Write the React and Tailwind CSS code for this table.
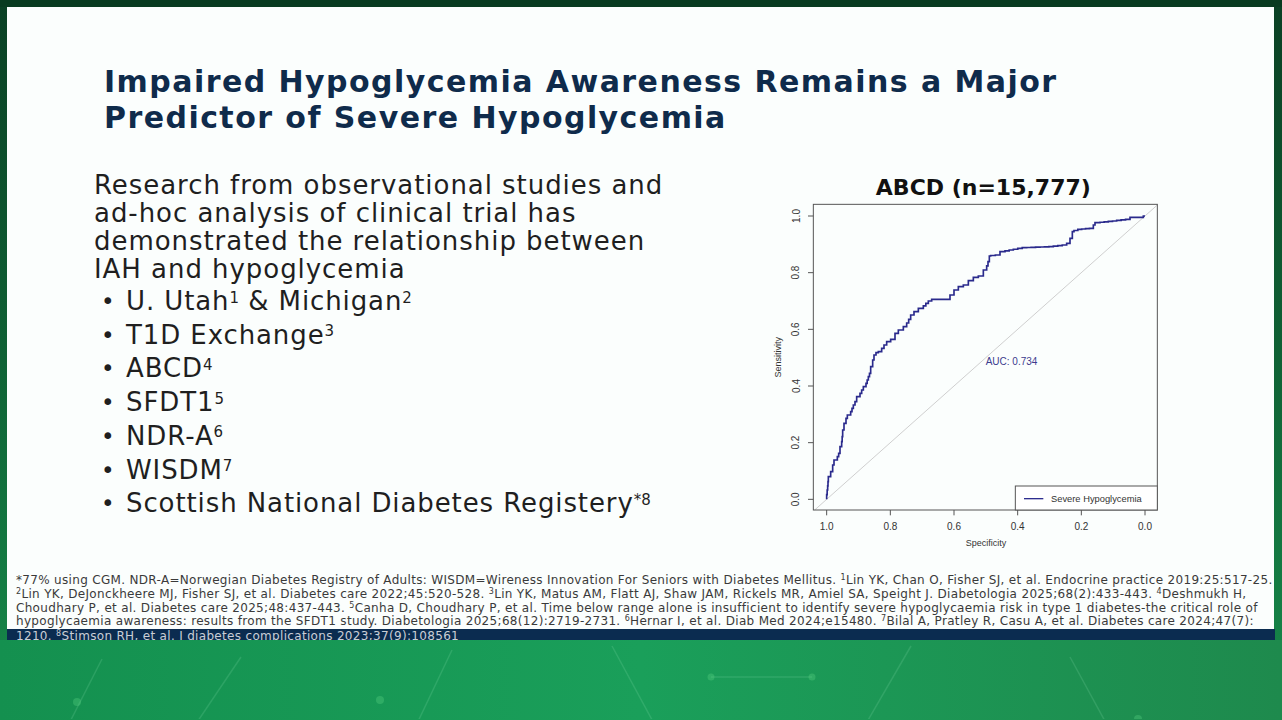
import React from "react";

const curve = [
  [200, 1018], [203, 990], [205, 965], [212, 950], [218, 935], [222, 915], [232, 900], [240, 880],
  [245, 860], [248, 830], [252, 810], [258, 790], [262, 775], [272, 765], [280, 745], [285, 735],
  [290, 725], [300, 710], [310, 690], [318, 680], [325, 660], [332, 640], [338, 620], [342, 600],
  [348, 585], [355, 578], [365, 575], [372, 565], [380, 555], [392, 545], [405, 538], [415, 520],
  [430, 510], [440, 500], [452, 478], [462, 465], [475, 455], [490, 445], [505, 430], [515, 423],
  [530, 418], [570, 418], [582, 405], [595, 390], [610, 380], [625, 375], [640, 362], [655, 352],
  [670, 348], [680, 330], [688, 305], [692, 288], [720, 285], [735, 275], [760, 270], [800, 263],
  [880, 260], [920, 255], [930, 250], [937, 235], [942, 215], [965, 208], [1000, 205], [1005, 195],
  [1020, 188], [1070, 183], [1110, 178], [1112, 172], [1150, 172], [1155, 168],
];

// turn the traced points into the stair steps of an ROC curve
const stairs = (pts) => {
  let d = `M${pts[0][0]},${pts[0][1]}`;
  for (let i = 1; i < pts.length; i++) {
    const [ax, ay] = pts[i - 1];
    const [bx, by] = pts[i];
    const n = Math.max(1, Math.round(Math.hypot(bx - ax, by - ay) / 14));
    for (let k = 1; k <= n; k++) {
      d += ` V${(ay + ((by - ay) * k) / n).toFixed(1)} H${(ax + ((bx - ax) * k) / n).toFixed(1)}`;
    }
  }
  return d;
};

const yTicks = [0, 0.2, 0.4, 0.6, 0.8, 1];
const xTicks = [1, 0.8, 0.6, 0.4, 0.2, 0];

const RocChart = () => (
  <svg width="420" height="400" viewBox="0 0 1260 1200" className="shrink-0" style={{ fontFamily: "'Liberation Sans', Arial, sans-serif" }}>
    <text x="670" y="105" textAnchor="middle" fontSize="66" fontWeight="700" fill="#111" style={{ fontFamily: "'DejaVu Sans', sans-serif" }}>
      ABCD (n=15,777)
    </text>
    <line x1="164" y1="1050" x2="1192" y2="135" stroke="#cfcfcf" strokeWidth="3" />
    <path d={stairs(curve)} fill="none" stroke="#2a2a8c" strokeWidth="5" />
    <rect x="160" y="133" width="1032" height="917" fill="none" stroke="#555" strokeWidth="3" />
    {yTicks.map((t) => {
      const y = 1018 - t * 850;
      return (
        <g key={t}>
          <line x1="144" y1={y} x2="160" y2={y} stroke="#555" strokeWidth="3" />
          <text x="108" y={y} textAnchor="middle" dominantBaseline="central" fontSize="30" fill="#333" transform={`rotate(-90 108 ${y})`}>
            {t.toFixed(1)}
          </text>
        </g>
      );
    })}
    {xTicks.map((s) => {
      const x = 200 + (1 - s) * 955;
      return (
        <g key={s}>
          <line x1={x} y1="1050" x2={x} y2="1066" stroke="#555" strokeWidth="3" />
          <text x={x} y="1100" textAnchor="middle" dominantBaseline="central" fontSize="30" fill="#333">
            {s.toFixed(1)}
          </text>
        </g>
      );
    })}
    <text x="55" y="592" textAnchor="middle" dominantBaseline="central" fontSize="27" fill="#333" transform="rotate(-90 55 592)">
      Sensitivity
    </text>
    <text x="678" y="1148" textAnchor="middle" dominantBaseline="central" fontSize="27" fill="#333">
      Specificity
    </text>
    <text x="677" y="603" dominantBaseline="central" fontSize="30" fill="#3b3b8e">
      AUC: 0.734
    </text>
    <rect x="766" y="978" width="426" height="72" fill="#fff" stroke="#555" strokeWidth="3" />
    <line x1="792" y1="1016" x2="850" y2="1016" stroke="#2e2e8f" strokeWidth="4" />
    <text x="873" y="1016" dominantBaseline="central" fontSize="28" fill="#333">
      Severe Hypoglycemia
    </text>
  </svg>
);

const bullets = [
  ["U. Utah", "1", " & Michigan", "2"],
  ["T1D Exchange", "3"],
  ["ABCD", "4"],
  ["SFDT1", "5"],
  ["NDR-A", "6"],
  ["WISDM", "7"],
  ["Scottish National Diabetes Registery", "*8"],
];

const Network = () => (
  <svg width="1282" height="79" viewBox="0 0 1282 79" className="block">
    <g stroke="rgba(160,235,190,0.16)" strokeWidth="1.5" fill="none">
      <line x1="102" y1="19" x2="53" y2="115" />
      <line x1="241" y1="17" x2="175" y2="115" />
      <line x1="452" y1="10" x2="403" y2="113" />
      <line x1="612" y1="6" x2="670" y2="113" />
      <line x1="711" y1="37" x2="812" y2="37" />
      <line x1="911" y1="6" x2="849" y2="113" />
      <line x1="1070" y1="17" x2="1124" y2="116" />
    </g>
    <g fill="rgba(90,210,130,0.35)">
      <circle cx="77" cy="62" r="4" />
      <circle cx="380" cy="60" r="4" />
      <circle cx="711" cy="37" r="3.5" />
      <circle cx="812" cy="37" r="3.5" />
      <circle cx="1138" cy="79" r="4" />
    </g>
  </svg>
);

const App = () => {
  return (
    <div className="w-[1282px] h-[720px] overflow-hidden flex flex-col bg-gradient-to-b from-[#0a4024] via-[#0f6235] to-[#178c4c]">
      <div className="h-[7px] shrink-0 bg-[#083b20]" />
      <div className="ml-[7px] w-[1267px] h-[622px] shrink-0 bg-[#fbfefd] flex flex-col">
        <h1
          className="pt-[57px] pl-[97px] text-[30px] leading-[36px] font-bold tracking-[1.45px] text-[#0f2b4b]"
          style={{ fontFamily: "'DejaVu Sans', sans-serif" }}
        >
          Impaired Hypoglycemia Awareness Remains a Major
          <br />
          Predictor of Severe Hypoglycemia
        </h1>

        <div className="flex mt-[24px] pl-[87px]">
          <div className="w-[666px] pt-[11px] text-[#1f1f1f]" style={{ fontFamily: "'DejaVu Sans', sans-serif" }}>
            <p className="text-[26px] leading-[28px] tracking-[0.95px]">
              Research from observational studies and
              <br />
              ad-hoc analysis of clinical trial has
              <br />
              demonstrated the relationship between
              <br />
              IAH and hypoglycemia
            </p>
            <ul className="mt-[2px] text-[26px] leading-[33.7px] tracking-[0.9px]">
              {bullets.map((b) => (
                <li key={b[0]} className="flex">
                  <span className="w-[32px] pl-[7px] shrink-0 text-[23px]">•</span>
                  <span>
                    {b[0]}
                    <sup className="text-[15px] tracking-normal">{b[1]}</sup>
                    {b[2]}
                    {b[3] && <sup className="text-[15px] tracking-normal">{b[3]}</sup>}
                  </span>
                </li>
              ))}
            </ul>
          </div>
          <RocChart />
        </div>

        <div
          className="mt-auto pl-[9px] text-[12px] leading-[13.7px] tracking-[0.32px] text-[#3a3a3a] whitespace-nowrap"
          style={{ fontFamily: "'DejaVu Sans', sans-serif" }}
        >
          <div>
            *77% using CGM. NDR-A=Norwegian Diabetes Registry of Adults: WISDM=Wireness Innovation For Seniors with Diabetes Mellitus. <sup className="text-[8px]">1</sup>Lin YK, Chan O, Fisher SJ, et al. Endocrine practice 2019:25:517-25.
          </div>
          <div>
            <sup className="text-[8px]">2</sup>Lin YK, DeJonckheere MJ, Fisher SJ, et al. Diabetes care 2022;45:520-528. <sup className="text-[8px]">3</sup>Lin YK, Matus AM, Flatt AJ, Shaw JAM, Rickels MR, Amiel SA, Speight J. Diabetologia 2025;68(2):433-443. <sup className="text-[8px]">4</sup>Deshmukh H,
          </div>
          <div>
            Choudhary P, et al. Diabetes care 2025;48:437-443. <sup className="text-[8px]">5</sup>Canha D, Choudhary P, et al. Time below range alone is insufficient to identify severe hypoglycaemia risk in type 1 diabetes-the critical role of
          </div>
          <div>
            hypoglycaemia awareness: results from the SFDT1 study. Diabetologia 2025;68(12):2719-2731. <sup className="text-[8px]">6</sup>Hernar I, et al. Diab Med 2024;e15480. <sup className="text-[8px]">7</sup>Bilal A, Pratley R, Casu A, et al. Diabetes care 2024;47(7):
          </div>
        </div>
      </div>

      <div
        className="ml-[7px] w-[1268px] h-[11px] shrink-0 overflow-hidden bg-[#0b2c50] pt-[1px] pl-[9px] text-[12px] leading-[13.7px] tracking-[0.32px] text-[#c9ced6] whitespace-nowrap"
        style={{ fontFamily: "'DejaVu Sans', sans-serif" }}
      >
        1210. <sup className="text-[8px]">8</sup>Stimson RH, et al. J diabetes complications 2023;37(9):108561
      </div>

      <div className="flex-1 bg-gradient-to-r from-[#14904f] via-[#1a9f5a] to-[#1e8a4d]">
        <Network />
      </div>
    </div>
  );
};

export default App;
